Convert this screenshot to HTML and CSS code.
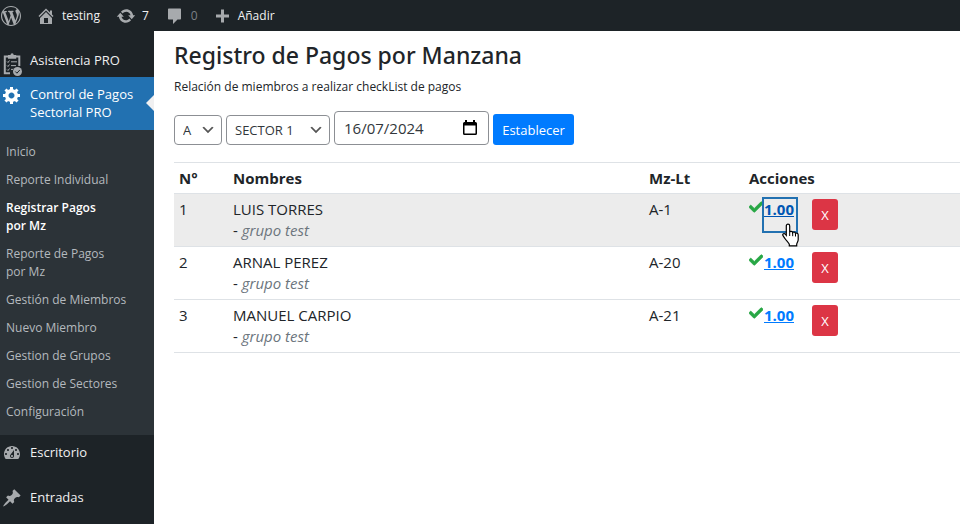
FILE: index.html
```html
<!DOCTYPE html>
<html lang="es">
<head>
<meta charset="utf-8">
<meta name="viewport" content="width=device-width, initial-scale=1">
<title>Registro de Pagos por Manzana</title>
<link rel="stylesheet" href="styles.css">
</head>
<body>
<svg class="sprite" aria-hidden="true">
  <symbol id="check" viewBox="0 0 512 512"><path d="M173.898 439.404l-166.4-166.4c-9.997-9.997-9.997-26.206 0-36.204l36.203-36.204c9.997-9.998 26.207-9.998 36.204 0L192 312.69 432.095 72.596c9.997-9.997 26.207-9.997 36.204 0l36.203 36.204c9.997 9.997 9.997 26.206 0 36.204l-294.4 294.401c-9.998 9.997-26.207 9.997-36.204-.001z"/></symbol>
</svg>
<header class="adminbar">
  <a href="#" class="bar-item bar-logo"><svg class="icon" viewBox="0 0 20 20"><path d="M20 10c0-5.51-4.49-10-10-10C4.48 0 0 4.49 0 10c0 5.52 4.48 10 10 10 5.51 0 10-4.48 10-10zM7.78 15.37L4.37 6.22c.55-.02 1.17-.08 1.17-.08.5-.06.44-1.13-.06-1.11 0 0-1.45.11-2.37.11-.18 0-.37 0-.58-.01C4.12 2.69 6.87 1.11 10 1.11c2.33 0 4.45.87 6.05 2.34-.68-.11-1.65.39-1.65 1.58 0 .74.45 1.36.9 2.1.35.61.55 1.36.55 2.46 0 1.49-1.4 5-1.4 5l-3.03-8.37c.54-.02.82-.17.82-.17.5-.05.44-1.25-.06-1.22 0 0-1.44.12-2.38.12-.87 0-2.33-.12-2.33-.12-.5-.03-.56 1.2-.06 1.22l.92.08 1.26 3.41zM17.41 10c.24-.64.74-1.87.43-4.25.7 1.29 1.05 2.71 1.05 4.25 0 3.29-1.73 6.24-4.4 7.78.97-2.59 1.94-5.2 2.92-7.78zM6.1 18.09C3.12 16.65 1.11 13.53 1.11 10c0-1.3.23-2.48.72-3.59C3.25 10.3 4.67 14.2 6.1 18.09zm4.03-6.63l2.58 6.98c-.86.29-1.76.45-2.71.45-.79 0-1.57-.11-2.29-.33.81-2.38 1.62-4.74 2.42-7.1z"/></svg></a>
  <a href="#" class="bar-item"><svg class="icon" viewBox="0 0 20 20"><path d="M16 8.5l1.53 1.53-1.06 1.06L10 4.6l-6.47 6.49-1.06-1.06L10 2.5l4 4v-2h2v4zm-6-2.46l6 5.99V18H4v-5.97zM12 17v-5H8v5h4z"/></svg>testing</a>
  <a href="#" class="bar-item"><svg class="icon" viewBox="0 0 20 20"><path d="M10.2 3.28c3.53 0 6.43 2.61 6.92 6h2.08l-3.5 4-3.5-4h2.32c-.45-1.97-2.21-3.45-4.32-3.45-1.45 0-2.73.71-3.54 1.78L4.95 5.66C6.23 4.2 8.11 3.28 10.2 3.28zm-.4 13.44c-3.52 0-6.43-2.61-6.92-6H.8l3.5-4c1.17 1.33 2.33 2.67 3.5 4H5.48c.45 1.97 2.21 3.45 4.32 3.45 1.45 0 2.73-.71 3.54-1.78l1.71 1.95c-1.28 1.46-3.15 2.38-5.25 2.38z"/></svg>7</a>
  <a href="#" class="bar-item bar-muted"><svg class="icon" viewBox="0 0 20 20"><path d="M4 2.5h11c.6 0 1 .4 1 1v9c0 .6-.4 1-1 1h-2.500l-4.500 4.500v-4.500H4c-.6 0-1-.4-1-1v-9c0-.6.4-1 1-1z"/></svg>0</a>
  <a href="#" class="bar-item bar-new"><svg class="icon" viewBox="0 0 20 20"><path d="M17 8.5v3h-5v5H9v-5H4v-3h5v-5h3v5h5z"/></svg>Añadir</a>
</header>
<div class="layout">
  <nav class="sidebar">
    <a href="#" class="menu-item"><svg class="icon" viewBox="0 0 20 24"><path class="line" d="M8 21.200H2.800V4.600h14.500V14"/><path d="M6 2.900h2.500a1.600 1.600 0 0 1 3.200 0h2.500v3.800H6z"/><path class="line thin" d="M5 9.500l1 1 1.500-2M5 13.500l1 1 1.500-2M5 17.500l1 1 1.500-2M9 9.800h6M9 13.600h5M9 17.400h2"/><circle cx="15.500" cy="19.500" r="4.500"/><path class="line dark" d="M13.300 19.500l1.600 1.700 2.900-3.200"/></svg>Asistencia PRO</a>
    <a href="#" class="menu-item menu-open"><svg class="icon" viewBox="0 0 20 20"><path d="M18 12h-2.180c-.17.7-.44 1.350-.81 1.930l1.540 1.540-2.100 2.100-1.540-1.540c-.58.36-1.230.63-1.910.79V19H8v-2.180c-.68-.16-1.330-.43-1.910-.79l-1.540 1.540-2.120-2.120 1.540-1.540c-.36-.58-.63-1.230-.79-1.910H1V9.030h2.170c.16-.7.44-1.350.8-1.940L2.430 5.550l2.100-2.100 1.540 1.540c.58-.37 1.240-.64 1.930-.81V2h3v2.180c.68.16 1.330.43 1.910.79l1.540-1.540 2.120 2.120-1.540 1.540c.36.59.64 1.240.8 1.940H18V12zm-8.500 1.500c1.660 0 3-1.340 3-3s-1.340-3-3-3-3 1.340-3 3 1.340 3 3 3z"/></svg>Control de Pagos Sectorial PRO</a>
    <ul class="submenu">
      <li><a href="#">Inicio</a></li>
      <li><a href="#">Reporte Individual</a></li>
      <li><a href="#" class="current" aria-current="page">Registrar Pagos<br>por Mz</a></li>
      <li><a href="#">Reporte de Pagos<br>por Mz</a></li>
      <li><a href="#">Gestión de Miembros</a></li>
      <li><a href="#">Nuevo Miembro</a></li>
      <li><a href="#">Gestion de Grupos</a></li>
      <li><a href="#">Gestion de Sectores</a></li>
      <li><a href="#">Configuración</a></li>
    </ul>
    <a href="#" class="menu-item menu-last"><svg class="icon" viewBox="0 0 20 20"><path fill-rule="evenodd" d="M3.760 16h12.480c1.100-1.370 1.760-3.110 1.760-5 0-4.420-3.580-8-8-8s-8 3.580-8 8c0 1.890.66 3.630 1.760 5zM10 4c.55 0 1 .45 1 1s-.45 1-1 1-1-.45-1-1 .45-1 1-1zM6 6c.55 0 1 .45 1 1s-.45 1-1 1-1-.45-1-1 .45-1 1-1zm8 0c.55 0 1 .45 1 1s-.45 1-1 1-1-.45-1-1 .45-1 1-1zm-5.370 5.550L12 7v6c0 1.100-.9 2-2 2s-2-.9-2-2c0-.57.24-1.080.63-1.450zM4 10c.55 0 1 .45 1 1s-.45 1-1 1-1-.45-1-1 .45-1 1-1zm12 0c.55 0 1 .45 1 1s-.45 1-1 1-1-.45-1-1 .45-1 1-1zm-5 3c0-.55-.45-1-1-1s-1 .45-1 1 .45 1 1 1 1-.45 1-1z"/></svg>Escritorio</a>
    <a href="#" class="menu-item"><svg class="icon" viewBox="0 0 20 20"><path d="M10.440 3.020l1.820-1.820 6.360 6.350-1.830 1.820c-1.050-.68-2.480-.57-3.410.36l-.75.75c-.92.93-1.040 2.350-.35 3.410l-1.830 1.820-2.410-2.410-2.800 2.790c-.42.42-3.380 2.710-3.800 2.290s1.860-3.390 2.280-3.810l2.790-2.790L4.100 9.360l1.830-1.820c1.050.69 2.480.57 3.400-.36l.75-.75c.93-.92 1.050-2.350.36-3.410z"/></svg>Entradas</a>
    <a href="#" class="menu-item"><svg class="icon" viewBox="0 0 20 20"><path d="M13 11V4c0-.55-.45-1-1-1h-1.670L9 1H5L3.670 3H2c-.55 0-1 .45-1 1v7c0 .55.45 1 1 1h10c.55 0 1-.45 1-1z"/></svg></a>
  </nav>
  <main class="content">
    <h1>Registro de Pagos por Manzana</h1>
    <p class="lead">Relación de miembros a realizar checkList de pagos</p>
    <form class="filters">
      <select class="field mz" aria-label="Manzana"><option>A</option></select>
      <select class="field sector" aria-label="Sector"><option>SECTOR 1</option></select>
      <span class="field date">
        <input type="text" value="16/07/2024" aria-label="Fecha">
        <button type="button" class="calendar" aria-label="Calendario"><svg viewBox="0 0 14 16"><path fill-rule="evenodd" d="M2 0h2v2h6V0h2v2h.5A1.500 1.500 0 0 1 14 3.500v10a1.500 1.500 0 0 1-1.500 1.500h-11A1.500 1.500 0 0 1 0 13.500v-10A1.500 1.500 0 0 1 1.500 2H2zM1.500 5.500v8h11v-8z"/></svg></button>
      </span>
      <button type="button" class="btn primary">Establecer</button>
    </form>
    <table class="payments">
      <colgroup><col class="col-num"><col><col class="col-lot"><col class="col-act"></colgroup>
      <thead><tr><th>N°</th><th>Nombres</th><th>Mz-Lt</th><th>Acciones</th></tr></thead>
      <tbody>
        <tr class="hovered"><td>1</td><td>LUIS TORRES<br>- <em>grupo test</em></td><td>A-1</td>
          <td><div class="actions"><svg class="check"><use href="#check"/></svg><a href="#" class="amount focused">1.00<svg class="pointer" viewBox="0 0 18 24"><path d="M6 1.200c1 0 1.700.7 1.700 1.700v6.200c.4-1.200 2.800-1 3 .5.700-1 2.700-.7 2.800.8.900-.7 2.700-.3 2.700 1.400v4.600c0 2-1.200 3-1.500 4.800v1.600H7.300v-1.600C6.500 19.500 4 17.300 2.800 15.300L1 12.700c-.9-1.500 1.100-2.900 2.300-1.500l1 1.200V2.900c0-1 .7-1.700 1.700-1.700z" fill="#fff" stroke="#000" stroke-width="1.200"/><path d="M7.700 9v4M10.700 9.800v3.400M13.500 10.800v2.700" fill="none" stroke="#000"/></svg></a><button type="button" class="btn danger">X</button></div></td></tr>
        <tr><td>2</td><td>ARNAL PEREZ<br>- <em>grupo test</em></td><td>A-20</td>
          <td><div class="actions"><svg class="check"><use href="#check"/></svg><a href="#" class="amount">1.00</a><button type="button" class="btn danger">X</button></div></td></tr>
        <tr><td>3</td><td>MANUEL CARPIO<br>- <em>grupo test</em></td><td>A-21</td>
          <td><div class="actions"><svg class="check"><use href="#check"/></svg><a href="#" class="amount">1.00</a><button type="button" class="btn danger">X</button></div></td></tr>
      </tbody>
    </table>
  </main>
</div>
</body>
</html>
```

FILE: styles.css
```css
* { box-sizing: border-box; }
body {
  margin: 0;
  height: 100vh;
  display: flex;
  flex-direction: column;
  overflow: hidden;
  background: #fff;
  color: #212529;
  font-family: "Open Sans", "Noto Sans", sans-serif;
  font-size: 15px;
  line-height: 21px;
}
a { color: inherit; text-decoration: none; }
button, input, select { font: inherit; color: inherit; margin: 0; }
.sprite { display: none; }
.icon { width: 20px; height: 20px; fill: currentColor; flex: none; color: #a7aaad; }
.line { fill: none; stroke: currentColor; stroke-width: 2; }
.thin { stroke-width: 1; }
.dark { stroke: #1d2327; stroke-width: 1; }

.adminbar {
  display: flex;
  flex: none;
  align-items: center;
  gap: 16px;
  height: 31px;
  background: #1d2327;
  color: #f0f0f1;
  font-size: 12px;
}
.bar-item { display: flex; align-items: center; gap: 6px; }
.bar-logo { padding-left: 1px; margin-right: -1px; }
.bar-muted { color: #7c8085; }
.bar-new { margin-left: -2px; }

.layout { display: flex; flex: 1; min-height: 0; }
.sidebar {
  flex: none;
  width: 154px;
  padding-top: 12px;
  overflow: hidden;
  background: #1d2327;
  color: #f0f0f1;
  font-size: 13px;
  line-height: 18px;
}
.menu-item { display: flex; gap: 8px; padding: 8px 10px 8px 2px; line-height: 18px; }
.menu-item:first-child .icon { height: 24px; margin: 1px 0 -7px; }
.menu-open { position: relative; padding-bottom: 9px; background: #2271b1; color: #fff; }
.menu-open .icon { color: #fff; }
.menu-open::after {
  content: "";
  position: absolute;
  right: 0;
  top: 18px;
  border: 8px solid transparent;
  border-left: 0;
  border-right-color: #f0f0f1;
}
.menu-last { margin-bottom: 9px; }
.submenu {
  margin: 0;
  padding: 8px 0 9px;
  list-style: none;
  background: #2c3338;
  color: #b4b9be;
  font-size: 12px;
}
.submenu a { display: block; padding: 5px 6px; }
.submenu .current { color: #fff; font-weight: 600; }

.content { flex: 1; min-width: 0; padding: 8px 0 0 20px; }
h1 { margin: 0; font-family: "Noto Sans", "Open Sans", sans-serif; font-size: 23px; line-height: 32px; font-weight: 500; }
.lead { margin: 6px 0 14px; font-size: 12px; line-height: 20px; }
.filters { display: flex; align-items: flex-end; gap: 4px; margin-bottom: 17px; }
.field { border: 1px solid #8c8f94; border-radius: 4px; background: #fff; color: #32373c; }
select.field {
  height: 30px;
  padding: 0 24px 0 8px;
  appearance: none;
  font-size: 13px;
  background: #fff url("data:image/svg+xml,%3Csvg xmlns='http://www.w3.org/2000/svg' viewBox='0 0 20 20'%3E%3Cpath d='M5 6l5 5 5-5 2 1-7 7-7-7 2-1z' fill='%23555'/%3E%3C/svg%3E") no-repeat right 5px center / 16px 16px;
}
.mz { width: 48px; }
.sector { width: 104px; }
.date { display: flex; align-items: center; width: 155px; height: 34px; padding: 0 11px 0 9px; }
.date input { flex: 1; min-width: 0; padding: 0; border: 0; outline: 0; background: none; }
.calendar { display: flex; padding: 0; border: 0; background: none; }
.calendar svg { width: 14px; height: 16px; fill: #000; }
.btn { height: 31px; padding: 1px 8px 0; border: 0; border-radius: 3px; color: #fff; font-size: 13px; }
.primary { width: 81px; background: #007bff; }
.danger { width: 26px; margin-left: 16px; background: #dc3545; }

.payments { width: 100%; table-layout: fixed; border-collapse: collapse; }
.col-num { width: 54px; }
.col-lot { width: 100px; }
.col-act { width: 216px; }
.payments th, .payments td { padding: 5px; border-top: 1px solid #dee2e6; text-align: left; vertical-align: top; }
.payments th { font-weight: 700; padding-bottom: 4px; }
.payments tbody tr:last-child td { border-bottom: 1px solid #dee2e6; }
.payments em { color: #6c757d; }
.hovered { background: #ececec; }
.actions { display: flex; align-items: flex-start; }
.check { width: 14px; height: 16px; fill: #28a745; stroke: #28a745; stroke-width: 30; margin-right: 1px; overflow: visible; }
.amount { color: #007bff; font-weight: 700; text-decoration: underline; width: 32px; }
.focused { position: relative; color: #0056b3; height: 32px; outline: 2px solid #2271b1; }
.pointer { position: absolute; left: 18px; top: 24px; width: 18px; height: 24px; z-index: 1; }
```
